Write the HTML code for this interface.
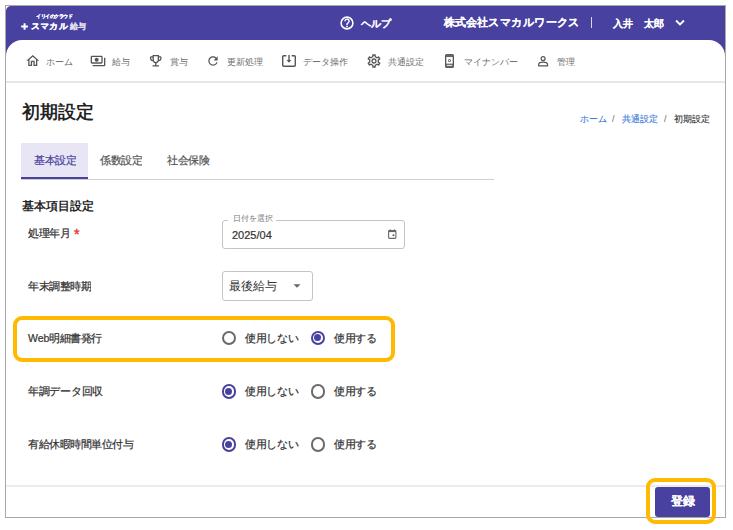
<!DOCTYPE html>
<html><head><meta charset="utf-8">
<style>
*{box-sizing:border-box;margin:0;padding:0}
html,body{width:733px;height:530px;overflow:hidden;background:#fff;font-family:"Liberation Sans",sans-serif;color:#333}
.a{position:absolute}
.t{position:absolute;white-space:nowrap;line-height:1;transform-origin:0 0;transform:scale(.5);font-size:calc(var(--f)*2px);letter-spacing:calc(var(--ls,0)*2px);-webkit-text-stroke:calc(var(--sw,0)*2px) currentColor}
#frame{position:absolute;left:5px;top:5px;width:721px;height:513px;border:1px solid #a8a8a8}
#hdr{position:absolute;left:6px;top:6px;width:719px;height:50px;background:#4841a0;border-radius:5px 0 0 0}
#nav{position:absolute;left:6px;top:40px;width:719px;height:43px;background:#fff;border-radius:16px 16px 0 0;border-bottom:2px solid #e6e6e6}
svg{position:absolute;display:block;overflow:visible}
.nt{--f:9;color:#6e6e6e}
.w{color:#fff;font-weight:bold;--sw:0.12}
.lbl{--f:10.5;color:#333;--sw:0.22}
.radio{position:absolute;width:14.6px;height:14.6px;border-radius:50%;border:2px solid #6a6a6a}
.radio.on{border-color:#4841a0}
.radio.on::after{content:"";position:absolute;left:1.8px;top:1.8px;width:7px;height:7px;border-radius:50%;background:#4841a0}
.orange{position:absolute;border:4px solid #ffb900;border-radius:9px}
</style></head><body>
<div id="frame"></div>
<div id="hdr"></div>
<div id="nav"></div>

<!-- header -->
<div class="t w" style="left:36px;top:14px;--f:4.5;--sw:0.2">イリイのクラウド</div>
<svg style="left:20.8px;top:23px" width="7.2" height="7" viewBox="0 0 7.2 7"><path d="M3.6 0.2V6.8M0.2 3.5H7" stroke="#fff" stroke-width="2"/></svg>
<div class="t w" style="left:31.5px;top:21.5px;--f:8.6;--ls:0.55;--sw:0.3;transform:scale(.5) skewX(-5deg)">スマカル</div>
<div class="t w" style="left:69.5px;top:22.3px;--f:8.1;color:#e4e2f0">給与</div>
<svg style="left:340px;top:15.7px" width="14" height="14" viewBox="0 0 14 14"><circle cx="7" cy="7" r="5.9" fill="none" stroke="#fff" stroke-width="1.6"/><path d="M4.9 5.2a2.1 2.1 0 1 1 3 1.9c-.6.3-.9.7-.9 1.4v.5" fill="none" stroke="#fff" stroke-width="1.5"/><circle cx="7" cy="10.5" r="0.9" fill="#fff"/></svg>
<div class="t w" style="left:360.5px;top:17.5px;--f:10.15">ヘルプ</div>
<div class="t w" style="left:444px;top:17px;--f:10.9">株式会社スマカルワークス</div>
<div class="a" style="left:591px;top:17px;width:1px;height:11px;background:#d8d6ec"></div>
<div class="t w" style="left:612.5px;top:17.5px;--f:10.1">入井</div>
<div class="t w" style="left:644px;top:17.5px;--f:10.1">太郎</div>
<svg style="left:675px;top:19px" width="10" height="8" viewBox="0 0 10 8"><path d="M1 1.5l4 4 4-4" fill="none" stroke="#fff" stroke-width="1.8"/></svg>

<!-- nav -->
<svg style="left:24.5px;top:53px" width="15.5" height="15.5" viewBox="0 0 24 24"><path fill="#555" d="M12 5.69l5 4.5V18h-2v-6H9v6H7v-7.81l5-4.5M12 3L2 12h3v8h6v-6h2v6h6v-8h3L12 3z"/></svg>
<div class="t nt" style="left:45.5px;top:57px">ホーム</div>
<svg style="left:90px;top:53px" width="16" height="16" viewBox="0 0 24 24"><path fill="#555" d="M19 14V6c0-1.1-.9-2-2-2H3c-1.1 0-2 .9-2 2v8c0 1.1.9 2 2 2h14c1.1 0 2-.9 2-2zm-2 0H3V6h14v8zm-7-7c-1.66 0-3 1.34-3 3s1.34 3 3 3 3-1.34 3-3-1.34-3-3-3zm13 0v11c0 1.1-.9 2-2 2H4v-2h17V7h2z"/></svg>
<div class="t nt" style="left:111.5px;top:57px">給与</div>
<svg style="left:147.7px;top:53px" width="15.5" height="15.5" viewBox="0 0 24 24"><path fill="#555" d="M19 5h-2V3H7v2H5c-1.1 0-2 .9-2 2v1c0 2.55 1.92 4.63 4.39 4.94.63 1.5 1.98 2.63 3.61 2.96V19H7v2h10v-2h-4v-3.1c1.63-.33 2.98-1.46 3.61-2.96C19.08 12.63 21 10.55 21 8V7c0-1.1-.9-2-2-2zM5 8V7h2v3.82C5.84 10.4 5 9.3 5 8zm7 6c-1.65 0-3-1.35-3-3V5h6v6c0 1.65-1.35 3-3 3zm7-6c0 1.3-.84 2.4-2 2.82V7h2v1z"/></svg>
<div class="t nt" style="left:169.5px;top:57px">賞与</div>
<svg style="left:206px;top:54px" width="14" height="14" viewBox="0 0 24 24"><path fill="#555" d="M17.65 6.35C16.2 4.9 14.21 4 12 4c-4.42 0-7.99 3.58-7.99 8s3.57 8 7.99 8c3.73 0 6.84-2.55 7.73-6h-2.08c-.82 2.33-3.04 4-5.65 4-3.31 0-6-2.69-6-6s2.69-6 6-6c1.66 0 3.14.69 4.22 1.78L13 11h7V4l-2.35 2.35z"/></svg>
<div class="t nt" style="left:227px;top:57px">更新処理</div>
<svg style="left:282px;top:55px" width="14" height="12" viewBox="0 0 14 12"><path d="M4.3 0.7H1.7a1 1 0 0 0-1 1V10.3a1 1 0 0 0 1 1h10.6a1 1 0 0 0 1-1V1.7a1 1 0 0 0-1-1H9.7" fill="none" stroke="#555" stroke-width="1.4"/><path d="M7 0V6.5" stroke="#555" stroke-width="1.4"/><path d="M4.6 5L7 7.8 9.4 5z" fill="#555"/></svg>
<div class="t nt" style="left:303px;top:57px">データ操作</div>
<svg style="left:366px;top:53px" width="16" height="16" viewBox="0 0 24 24"><path fill="#555" d="M19.43 12.98c.04-.32.07-.64.07-.98 0-.34-.03-.66-.07-.98l2.11-1.65c.19-.15.24-.42.12-.64l-2-3.46c-.09-.16-.26-.25-.44-.25-.06 0-.12.01-.17.03l-2.49 1c-.52-.4-1.08-.73-1.69-.98l-.38-2.65C14.46 2.18 14.25 2 14 2h-4c-.25 0-.46.18-.49.42l-.38 2.65c-.61.25-1.17.59-1.69.98l-2.49-1c-.06-.02-.12-.03-.18-.03-.17 0-.34.09-.43.25l-2 3.46c-.13.22-.07.49.12.64l2.11 1.65c-.04.32-.07.65-.07.98 0 .33.03.66.07.98l-2.11 1.65c-.19.15-.24.42-.12.64l2 3.46c.09.16.26.25.44.25.06 0 .12-.01.17-.03l2.49-1c.52.4 1.08.73 1.69.98l.38 2.65c.03.24.24.42.49.42h4c.25 0 .46-.18.49-.42l.38-2.65c.61-.25 1.17-.59 1.69-.98l2.49 1c.06.02.12.03.18.03.17 0 .34-.09.43-.25l2-3.46c.12-.22.07-.49-.12-.64l-2.11-1.65zm-1.98-1.71c.04.31.05.52.05.73 0 .21-.02.43-.05.73l-.14 1.13.89.7 1.08.84-.7 1.21-1.27-.51-1.04-.42-.9.68c-.43.32-.84.56-1.25.73l-1.06.43-.16 1.13-.2 1.35h-1.4l-.19-1.35-.16-1.13-1.06-.43c-.43-.18-.83-.41-1.23-.71l-.91-.7-1.06.43-1.27.51-.7-1.21 1.08-.84.89-.7-.14-1.13c-.03-.31-.05-.54-.05-.74s.02-.43.05-.73l.14-1.13-.89-.7-1.08-.84.7-1.21 1.27.51 1.04.42.9-.68c.43-.32.84-.56 1.25-.73l1.06-.43.16-1.13.2-1.35h1.39l.19 1.35.16 1.13 1.06.43c.43.18.83.41 1.23.71l.91.7 1.06-.43 1.27-.51.7 1.21-1.07.85-.89.7.14 1.13zM12 8c-2.21 0-4 1.79-4 4s1.79 4 4 4 4-1.79 4-4-1.79-4-4-4zm0 6c-1.1 0-2-.9-2-2s.9-2 2-2 2 .9 2 2-.9 2-2 2z"/></svg>
<div class="t nt" style="left:387.5px;top:57px">共通設定</div>
<svg style="left:445px;top:54px" width="9" height="14" viewBox="0 0 9 14"><rect x="0.65" y="0.65" width="7.7" height="12.7" rx="1.2" fill="none" stroke="#555" stroke-width="1.3"/><rect x="0.65" y="0.65" width="7.7" height="2.4" fill="#666"/><rect x="0.65" y="9.6" width="7.7" height="3.7" fill="#666"/><path d="M1.9 11.4h5.2" stroke="#fff" stroke-width="0.9"/><circle cx="4.5" cy="6.4" r="1.5" fill="#666"/><circle cx="4.5" cy="6.4" r="0.6" fill="#fff"/></svg>
<div class="t nt" style="left:464px;top:57px">マイナンバー</div>
<svg style="left:537.8px;top:56px" width="10.2" height="10.4" viewBox="0 0 10.2 10.4"><circle cx="5.1" cy="2.6" r="2" fill="none" stroke="#555" stroke-width="1.2"/><path d="M0.6 9.8V8.9C0.6 7.1 3 6.2 5.1 6.2S9.6 7.1 9.6 8.9V9.8Z" fill="none" stroke="#555" stroke-width="1.2" stroke-linejoin="round"/></svg>
<div class="t nt" style="left:556.5px;top:57px">管理</div>

<!-- title & breadcrumb -->
<div class="t" style="left:22px;top:103px;--f:18;font-weight:bold;color:#222">初期設定</div>
<div class="t" style="left:579.5px;top:114px;--f:9;--sw:0.12;color:#3b7dd8">ホーム</div>
<div class="t" style="left:611.5px;top:114px;--f:9;color:#666">/</div>
<div class="t" style="left:622px;top:114px;--f:9;--sw:0.12;color:#3b7dd8">共通設定</div>
<div class="t" style="left:664px;top:114px;--f:9;color:#666">/</div>
<div class="t" style="left:674px;top:114px;--f:9;--sw:0.12;color:#333">初期設定</div>

<!-- tabs -->
<div class="a" style="left:21px;top:179px;width:473px;height:1px;background:#cfcfcf"></div>
<div class="a" style="left:21px;top:143px;width:67px;height:36px;background:#e8e6f4;border-bottom:2px solid #4841a0"></div>
<div class="t" style="left:34px;top:155px;--f:10.5;--sw:0.2;color:#4841a0">基本設定</div>
<div class="t" style="left:100px;top:155px;--f:10.5;--sw:0.2;color:#555">係数設定</div>
<div class="t" style="left:167px;top:155px;--f:10.5;--sw:0.2;color:#555">社会保険</div>

<!-- form -->
<div class="t" style="left:21.5px;top:199.5px;--f:11.8;font-weight:bold;color:#222">基本項目設定</div>

<div class="t lbl" style="left:27.5px;top:228px">処理年月</div>
<div class="t" style="left:73.5px;top:227px;--f:14;--sw:0.4;color:#e53935">*</div>
<div class="a" style="left:222px;top:220px;width:183px;height:29px;border:1px solid #c4c4c4;border-radius:3px"></div>
<div class="a" style="left:228px;top:214px;height:8px;width:48px;background:#fff"></div>
<div class="t" style="left:232.5px;top:214px;--f:7.8;color:#777">日付を選択</div>
<div class="t" style="left:232px;top:230px;--f:11;--sw:0.2;color:#333">2025/04</div>
<svg style="left:388px;top:229px" width="8.5" height="10" viewBox="0 0 8.5 10"><rect x="0.6" y="1.6" width="7.3" height="7.8" rx="0.9" fill="none" stroke="#666" stroke-width="1.1"/><rect x="0.6" y="1.6" width="7.3" height="1.5" fill="#666"/><path d="M2.2 0.3v1.5M6.3 0.3v1.5" stroke="#666" stroke-width="1"/><rect x="4.6" y="5.4" width="1.7" height="1.7" fill="#555"/></svg>

<div class="t lbl" style="left:27.5px;top:281px">年末調整時期</div>
<div class="a" style="left:222px;top:271px;width:91px;height:30px;border:1px solid #c4c4c4;border-radius:3px"></div>
<div class="t" style="left:229px;top:280px;--f:12;color:#333">最後給与</div>
<svg style="left:293px;top:284px" width="8" height="4" viewBox="0 0 8 4"><path d="M0.5 0.2h7L4 3.8z" fill="#666"/></svg>

<div class="orange" style="left:13px;top:316px;width:382px;height:46px"></div>
<div class="t lbl" style="left:27.5px;top:333px">Web明細書発行</div>
<div class="radio" style="left:221.5px;top:330.5px"></div>
<div class="t lbl" style="left:245px;top:333px">使用しない</div>
<div class="radio on" style="left:310.5px;top:330.5px"></div>
<div class="t lbl" style="left:334px;top:333px">使用する</div>

<div class="t lbl" style="left:27.5px;top:386px">年調データ回収</div>
<div class="radio on" style="left:221.5px;top:384px"></div>
<div class="t lbl" style="left:245px;top:386px">使用しない</div>
<div class="radio" style="left:310.5px;top:384px"></div>
<div class="t lbl" style="left:334px;top:386px">使用する</div>

<div class="t lbl" style="left:27.5px;top:439px">有給休暇時間単位付与</div>
<div class="radio on" style="left:221.5px;top:437px"></div>
<div class="t lbl" style="left:245px;top:439px">使用しない</div>
<div class="radio" style="left:310.5px;top:437px"></div>
<div class="t lbl" style="left:334px;top:439px">使用する</div>

<!-- footer -->
<div class="a" style="left:6px;top:485px;width:719px;height:2px;background:#ececec"></div>
<div class="a" style="left:655px;top:486.5px;width:55px;height:30px;background:#4841a0;border-radius:3px"></div>
<div class="t w" style="left:671px;top:495px;--f:12">登録</div>
<div class="orange" style="left:646px;top:478px;width:70px;height:46px"></div>
</body></html>
